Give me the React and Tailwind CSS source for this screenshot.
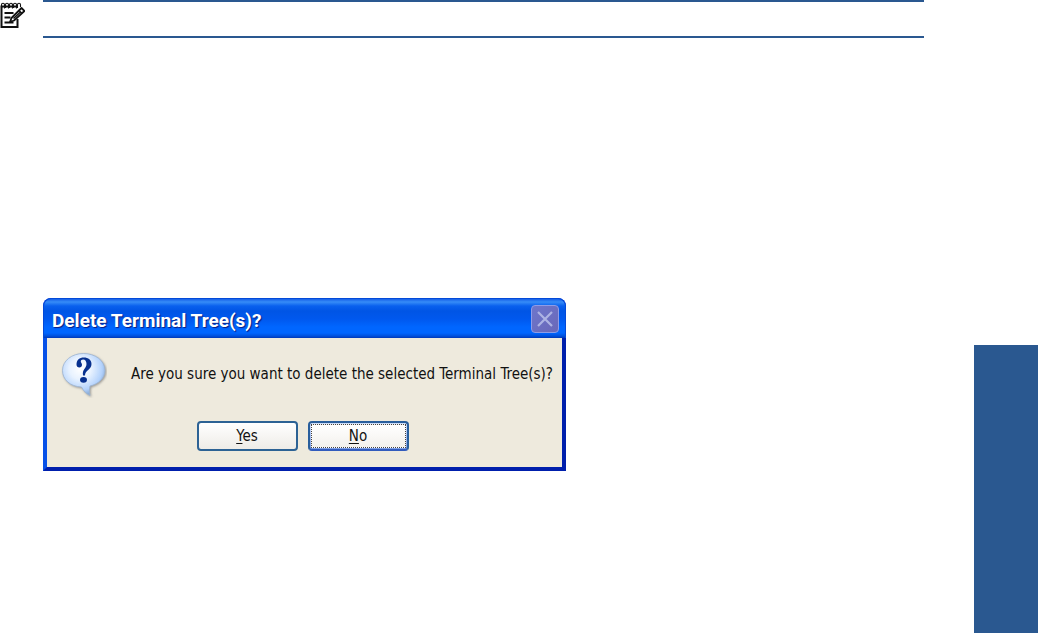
import React from "react";

function NoteIcon() {
  return (
    <svg
      width="25"
      height="28"
      viewBox="0 0 25 28"
      fill="none"
      stroke="#111"
      aria-hidden="true"
    >
      <path d="M18 4.500H1.500V25H17.500V17" strokeWidth="2" />
      <path
        d="M1.500 6V2.800a1.500 1.500 0 0 1 3 0V6.500M5.500 6V2.800a1.500 1.500 0 0 1 3 0V6.500M9.500 6V2.800a1.500 1.500 0 0 1 3 0V6.500M13.500 6V2.800a1.500 1.500 0 0 1 3 0V6.500M17.500 6V2.800a1.500 1.500 0 0 1 3 0V5"
        strokeWidth="1.100"
      />
      <path d="M4.500 11h9M4.500 15.500h6M4.500 20.500h9" strokeWidth="2" />
      <path
        d="M21.500 6l3 3-10.500 9.500-4 1.500 1.500-4z"
        fill="#fff"
        strokeWidth="1.800"
        strokeLinejoin="round"
      />
      <path d="M19 8.500l3 3M13.500 16.500l7-6.500" strokeWidth="1.500" />
    </svg>
  );
}

function QuestionIcon() {
  return (
    <svg className="shrink-0" width="46" height="46" viewBox="0 0 46 46" aria-hidden="true">
      <defs>
        <radialGradient id="bubble" cx="42%" cy="36%" r="64%">
          <stop offset="0" stopColor="#ffffff" />
          <stop offset="0.400" stopColor="#e8f2ff" />
          <stop offset="0.800" stopColor="#b3d2fc" />
          <stop offset="1" stopColor="#85a8d4" />
        </radialGradient>
        <filter id="bubbleShadow" x="-20%" y="-20%" width="140%" height="140%">
          <feDropShadow dx="1" dy="1" stdDeviation="0.8" floodColor="#777" floodOpacity="0.700" />
        </filter>
      </defs>
      <path
        d="M22.500 1.500C34 1.500 44 8.500 44 18.500c0 7.500-6.500 13.500-15 15.500-.8 3.500-.8 6.500 0 9.500-3.500-1.500-6.500-4.500-8.500-8.500C9 34.500 1.500 27.500 1.500 18.500 1.500 8.500 11 1.500 22.500 1.500z"
        fill="url(#bubble)"
        stroke="#9db4d0"
        strokeWidth="0.800"
        filter="url(#bubbleShadow)"
      />
      <path
        d="M15.500 12.500C15.500 8 18.500 5.500 22.800 5.500c4.600 0 7.700 2.500 7.700 6.500 0 5.800-6.500 6.300-6.500 11.500h-2c-1-6.500 3.500-7 3.500-11.500 0-2.700-1.200-4.500-3.400-4.500-1.500 0-2.300.8-2.300 1.900 0 1.200 1.200 1.700 1.200 3.400 0 1.700-1.100 2.600-2.600 2.600-1.700 0-2.900-1-2.900-2.900z"
        fill="#08318f"
      />
      <ellipse cx="22.500" cy="27.800" rx="3.500" ry="2.900" fill="#08318f" />
    </svg>
  );
}

function TitleBar() {
  return (
    <header className="flex h-10 items-center justify-between rounded-t-lg border-x border-t border-[#0349d8] bg-[linear-gradient(to_bottom,#1660e8_0px,#368cf8_3px,#0960ee_7px,#0055e5_12px,#0058ee_20px,#0066ff_28px,#0066ff_34px,#0050dc_37px,#0038b8_39px)] pr-1.5 pl-2">
      <h1
        id="dialog-title"
        className="pt-1 font-['Roboto','Liberation_Sans',sans-serif] text-[19px] leading-6 font-bold text-white [text-shadow:1px_1px_1px_#0a1d80]"
      >
        Delete Terminal Tree(s)?
      </h1>
      <button
        type="button"
        aria-label="Close"
        className="flex size-7 items-center justify-center rounded-sm border border-[#8f9ce6] bg-linear-to-br from-[#6d76cc] to-[#6a68b8]"
      >
        <svg width="18" height="18" viewBox="0 0 18 18" aria-hidden="true">
          <path d="M2 2l14 14M16 2L2 16" stroke="#adb3e3" strokeWidth="2.200" />
        </svg>
      </button>
    </header>
  );
}

function DialogButton({ accessKey, rest, focused }) {
  return (
    <button
      type="button"
      accessKey={accessKey.toLowerCase()}
      className={
        focused
          ? "h-[30px] w-[101px] rounded-[4px] border-2 border-[#285e9c] border-b-[#315bbd] bg-linear-to-b from-[#cfdffa] to-[#7f9fe6] p-px"
          : "h-[30px] w-[101px] rounded-[4px] border-2 border-[#2c6294] bg-linear-to-b from-white to-[#eeece7] p-px"
      }
    >
      <span
        className={
          focused
            ? "flex h-full items-center justify-center border border-dotted border-[#444] bg-linear-to-b from-white to-[#f3f1ed]"
            : "flex h-full items-center justify-center"
        }
      >
        <span>
          <span className="underline underline-offset-2">{accessKey}</span>
          {rest}
        </span>
      </span>
    </button>
  );
}

function DeleteDialog() {
  return (
    <section
      role="dialog"
      aria-labelledby="dialog-title"
      aria-describedby="dialog-message"
      className="w-[523px] max-w-full rounded-t-lg bg-[#0831d9] font-['DejaVu_Sans_Condensed','Noto_Sans',sans-serif] text-[15px] leading-5 text-[#111]"
    >
      <TitleBar />
      <div className="border-x-4 border-b-4 border-r-[#001fac] border-b-[#001fac] border-l-[#0751e8] bg-[#eeeadd] pt-3.5 pr-2 pb-4 pl-3.5">
        <div className="flex items-start gap-6">
          <QuestionIcon />
          <p id="dialog-message" className="pt-3 whitespace-nowrap">
            Are you sure you want to delete the selected Terminal Tree(s)?
          </p>
        </div>
        <div className="mt-[23px] flex justify-center gap-2.5 pr-2.5">
          <DialogButton accessKey="Y" rest="es" />
          <DialogButton accessKey="N" rest="o" focused />
        </div>
      </div>
    </section>
  );
}

function App() {
  return (
    <div className="flex min-h-screen bg-white">
      <main className="flex-1 pr-[50px]">
        <div className="flex items-start">
          <div className="w-[43px] shrink-0 pt-0.5">
            <NoteIcon />
          </div>
          <div className="h-[38px] flex-1 border-y-2 border-[#2a5890]" />
        </div>
        <div className="mt-65 pl-[43px]">
          <DeleteDialog />
        </div>
      </main>
      <aside className="flex w-16 shrink-0 flex-col pt-[345px]">
        <div className="flex-1 bg-[#2a5890]" />
      </aside>
    </div>
  );
}

export default App;
